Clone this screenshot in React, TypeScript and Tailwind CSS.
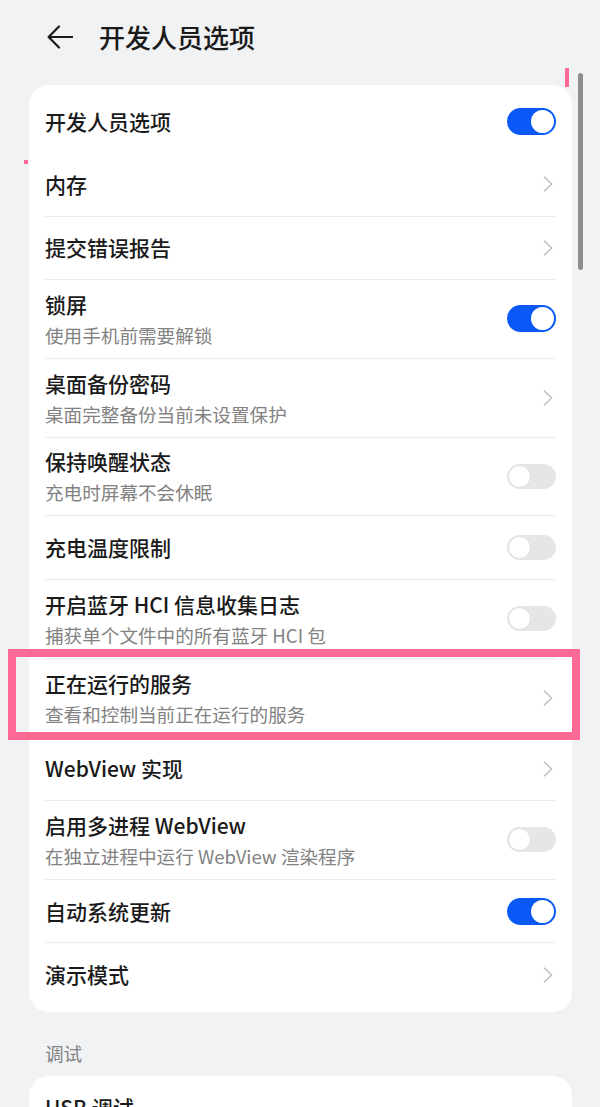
import React from "react";

type Row = {
  title: string;
  sub?: string;
  kind: "on" | "off" | "chev";
  divider?: boolean;
};

const rows: Row[] = [
  { title: "开发人员选项", kind: "on", divider: false },
  { title: "内存", kind: "chev" },
  { title: "提交错误报告", kind: "chev" },
  { title: "锁屏", sub: "使用手机前需要解锁", kind: "on" },
  { title: "桌面备份密码", sub: "桌面完整备份当前未设置保护", kind: "chev" },
  { title: "保持唤醒状态", sub: "充电时屏幕不会休眠", kind: "off" },
  { title: "充电温度限制", kind: "off" },
  { title: "开启蓝牙 HCI 信息收集日志", sub: "捕获单个文件中的所有蓝牙 HCI 包", kind: "off" },
  { title: "正在运行的服务", sub: "查看和控制当前正在运行的服务", kind: "chev" },
  { title: "WebView 实现", kind: "chev" },
  { title: "启用多进程 WebView", sub: "在独立进程中运行 WebView 渲染程序", kind: "off" },
  { title: "自动系统更新", kind: "on" },
  { title: "演示模式", kind: "chev", divider: false },
];

function Toggle({ on }: { on: boolean }) {
  if (on) {
    return (
      <div className="w-[49px] h-[27px] rounded-full bg-[#0a59f7] flex items-center justify-end pr-[2px] shrink-0">
        <div className="w-[23px] h-[23px] rounded-full bg-white" />
      </div>
    );
  }
  return (
    <div className="w-[49px] h-[25px] rounded-full bg-[#e6e6e6] flex items-center pl-[1px] shrink-0">
      <div className="w-[23px] h-[23px] rounded-full bg-white border border-[#dedede]" />
    </div>
  );
}

function Chevron() {
  return (
    <div className="w-[49px] flex justify-end pr-[3px] shrink-0">
      <svg width="10" height="16" viewBox="0 0 10 16" fill="none">
        <path d="M1.5 1.2 L8.6 8 L1.5 14.8" stroke="#c3c3c3" strokeWidth="1.6" strokeLinecap="round" strokeLinejoin="round" />
      </svg>
    </div>
  );
}

function SettingRow({ row }: { row: Row }) {
  const showDivider = row.divider !== false;
  return (
    <div>
      <div className={`flex items-center justify-between px-[16px] ${row.sub ? "h-[77.8px]" : "h-[62.5px]"}`}>
        <div className="flex flex-col">
          <div className="text-[21px] leading-[29px] text-[#1a1a1a] font-medium whitespace-nowrap">{row.title}</div>
          {row.sub && (
            <div className="text-[18.6px] leading-[26px] mt-[3px] text-[#828282] whitespace-nowrap">{row.sub}</div>
          )}
        </div>
        {row.kind === "chev" ? <Chevron /> : <Toggle on={row.kind === "on"} />}
      </div>
      {showDivider && <div className="mx-[16px] h-px bg-[#ececec]" />}
    </div>
  );
}

export default function App() {
  return (
    <div
      className="relative w-[600px] h-[1107px] overflow-hidden bg-[#f1f2f4]"
      style={{ fontFamily: '"Noto Sans CJK SC", "Noto Sans", sans-serif' }}
    >
      {/* Header */}
      <div className="h-[74px] flex items-center pl-[47px]">
        <svg width="26" height="24" viewBox="0 0 26 24" fill="none" className="shrink-0">
          <path d="M12 1.5 L1.6 12 L12 22.5 M1.6 12 H25.5" stroke="#1a1a1a" strokeWidth="2.2" strokeLinecap="round" strokeLinejoin="round" />
        </svg>
        <div className="ml-[26px] text-[26px] leading-[34px] font-medium text-[#1a1a1a]">开发人员选项</div>
      </div>

      {/* Main card */}
      <div className="mt-[11px] ml-[29px] w-[543px] bg-white rounded-[20px] pt-[5.5px] pb-[6px]">
        {rows.map((r, i) => (
          <SettingRow key={i} row={r} />
        ))}
      </div>

      {/* Section label */}
      <div className="mt-[28px] pl-[45px] text-[18.6px] leading-[26px] text-[#828282]">调试</div>

      {/* Second card */}
      <div className="mt-[10px] ml-[29px] w-[543px] bg-white rounded-[20px]">
        <div className="flex items-center px-[16px] h-[63px]">
          <div className="text-[21px] leading-[29px] text-[#1a1a1a] font-medium">USB 调试</div>
        </div>
      </div>

      {/* Scrollbar */}
      <div className="absolute left-[578px] top-[73px] w-[5px] h-[197px] rounded-full bg-[#8e8e8e]" />

      {/* Pink marks */}
      <div className="absolute left-[565px] top-[68px] w-[4px] h-[19px] bg-[#fe6a95]" />
      <div className="absolute left-[24px] top-[160px] w-[4px] h-[4px] bg-[#fe6a95]" />

      {/* Highlight box */}
      <div className="absolute left-[8px] top-[649px] w-[572px] h-[91px] border-[8px] border-[#fe6a95]" />
    </div>
  );
}
